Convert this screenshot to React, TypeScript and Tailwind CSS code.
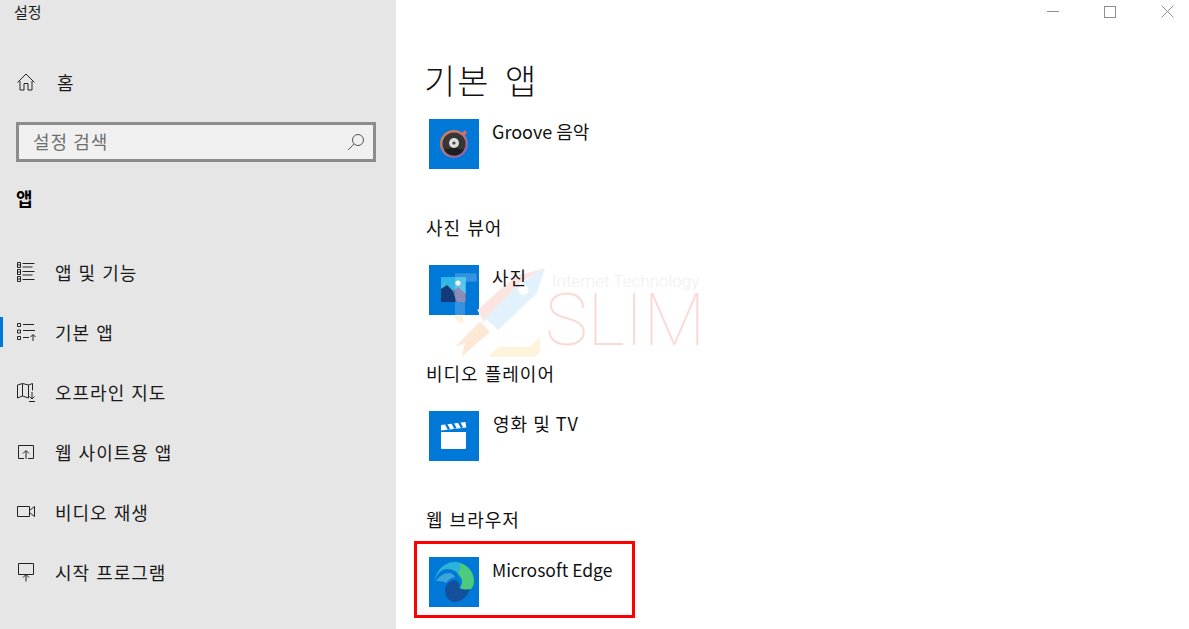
import type { ReactNode } from "react";

const font = { sans: "font-['Noto_Sans_CJK_KR','Noto_Sans',sans-serif]" };

function NavIcon({ children }: { children: ReactNode }) {
  return (
    <svg width="20" height="20" viewBox="0 0 20 20" fill="none" stroke="#222" strokeWidth="1" className="shrink-0">
      {children}
    </svg>
  );
}

const navItems: { label: string; icon: ReactNode; active?: boolean }[] = [
  {
    label: "앱 및 기능",
    icon: (
      <path d="M1.500 .5h3v5h-3zM1.500 7.500h3v5h-3zM1.500 14.500h3v5h-3zM1.500 3h3M1.500 10h3M1.500 17h3M6.500 1.500h12M6.500 5h10M6.500 9.500h12M6.500 13h10M6.500 17.500h12" />
    ),
  },
  {
    label: "기본 앱",
    active: true,
    icon: (
      <path d="M1.500 1.500h3v3h-3zM1.500 8h3v3h-3zM1.500 14.500h3v3h-3zM7 2.500h11M7 8.500h12M7 15.500h6M17 19v-6M14.500 15l2.500-2.500 2.500 2.500" />
    ),
  },
  {
    label: "오프라인 지도",
    icon: (
      <path d="M1.500 3v13l5-2 6 2V3l-6-1.500zM6.500 2v12M12.500 3l4-1.500v7M16 10v7M13.500 14.500l2.500 2.500 2.500-2.500M13 19.500h6" />
    ),
  },
  {
    label: "웹 사이트용 앱",
    icon: <path d="M6 16.500H2.500v-13h15v13H14M10 17V9M7 11.500L10 8.500l3 3M6 16.500h2M12 16.500h2" />,
  },
  {
    label: "비디오 재생",
    icon: <path d="M1.500 4.500h12v10h-12zM13.500 8.500l5-4v10l-5-4" />,
  },
  {
    label: "시작 프로그램",
    icon: <path d="M2.500 1.500h15v11h-15zM10 19.500v-7M7 15.500l3-3 3 3" />,
  },
];

function NavRow({ label, icon, active }: { label: string; icon: ReactNode; active?: boolean }) {
  return (
    <div className="relative flex h-[60px] items-center pl-[16px]">
      {active && <div className="absolute left-0 top-[15px] h-[30px] w-[3px] bg-[#0078d7]" />}
      <NavIcon>{icon}</NavIcon>
      <span className="ml-[19px] text-[18px] tracking-[1px] [word-spacing:1px] text-[#1a1a1a]">{label}</span>
    </div>
  );
}

function AppRow({ name, icon, textClass = "" }: { name: string; icon: ReactNode; textClass?: string }) {
  return (
    <div className="flex h-[50px] items-start pl-[33px]">
      <div className="h-[50px] w-[50px] shrink-0 bg-[#0078d7]">{icon}</div>
      <span className={`relative z-10 ml-[13px] mt-[-1px] leading-[26px] text-[#111] ${textClass}`}>{name}</span>
    </div>
  );
}

function SectionLabel({ children }: { children: ReactNode }) {
  return <h2 className="pl-[30px] text-[18px] leading-[26px] tracking-[1px] [word-spacing:1px] text-[#111]">{children}</h2>;
}

const grooveIcon = (
  <svg width="50" height="50" viewBox="0 0 50 50">
    <defs>
      <linearGradient id="ring" x1="0" y1="0" x2="1" y2="1">
        <stop offset="0" stopColor="#e8833f" />
        <stop offset="1" stopColor="#7a5fc0" />
      </linearGradient>
    </defs>
    <circle cx="25" cy="25" r="14" fill="url(#ring)" />
    <circle cx="25" cy="25" r="11.500" fill="#363636" />
    <path d="M15 30a11 11 0 0 0 20 0c-3 1-5 0-7-1h-6c-2 1-5 2-7 1z" fill="#1e1e1e" />
    <circle cx="25" cy="24" r="5" fill="#ddd" />
    <circle cx="25" cy="24" r="1.600" fill="#444" />
    <path d="M32 15l4-4 2 3-3 3z" fill="#d96a6a" />
  </svg>
);

const photoIcon = (
  <svg width="50" height="50" viewBox="0 0 50 50">
    <defs>
      <linearGradient id="sky" x1="0" y1="0" x2="0" y2="1">
        <stop offset="0" stopColor="#25b8e6" />
        <stop offset="1" stopColor="#5fb4ea" />
      </linearGradient>
    </defs>
    <rect x="12" y="12" width="25" height="25" fill="url(#sky)" />
    <path d="M12 24l6-4 6 6 4 11H12z" fill="#123b78" />
    <path d="M24 26l5-4 8 7v8h-9z" fill="#6f72a8" />
    <circle cx="29" cy="18" r="2.600" fill="#f1eee8" />
  </svg>
);

const movieIcon = (
  <svg width="50" height="50" viewBox="0 0 50 50">
    <path d="M12 21h25v16a1 1 0 0 1-1 1H13a1 1 0 0 1-1-1z" fill="#fff" />
    <path d="M12 14l24.500-3 .8 5.500-25.300 3z" fill="#fff" />
    <path d="M17 13l3 5.500M23.500 12l3 5.500M30 11.200l3 5.500" stroke="#0078d7" strokeWidth="2.400" />
  </svg>
);

const edgeIcon = (
  <svg width="50" height="50" viewBox="0 0 50 50">
    <path d="M5 26C7 13 15 5 26 5c2 0 4 .3 6 1 1 5 1 10 0 15-3-6-8-9-14-9C12 12 7 18 5 26z" fill="#2bb4d8" />
    <path d="M31 6c8 2 14 9 14 18 0 3-1 6-3 8-3 1-8 1-11-1 2-3 3-7 1-10-1-2-2-3-3-4 2-3 3-7 2-11z" fill="#4ccb7d" />
    <path d="M25 23c-5 1-9 5-9 10 0 6 3 11 9 12 7 0 13-5 16-13-4 1-8 1-11-1 1-4 0-7-5-8z" fill="#14509b" />
    <path d="M7 24c3-5 8-8 13-8 3 0 5 2 6 4-4 1-7 3-9 6-3-2-7-2-10-2z" fill="#3aa4dc" />
  </svg>
);

function Watermark() {
  return (
    <div className="pointer-events-none absolute left-[440px] top-[260px] h-[100px] w-[270px]">
      <svg width="270" height="100" viewBox="0 0 810 300" className="absolute inset-0">
        <path d="M45 40h65v25H75v100H45z" fill="#ffffff" fillOpacity="0.2" />
        <path d="M40 168h30v22L58 188z" fill="#fdf3dc" />
        <path d="M112 150l78-70 40-32 85-23-77 45-106 115z" fill="#fce4e1" />
        <path d="M135 175L235 75l80-50-25 75-115 110z" fill="#e1f2fd" />
        <circle cx="250" cy="90" r="15" fill="#fff" />
        <path d="M45 260l75-75 30 30-85 75 10-40z" fill="#fde8d6" />
        <path d="M300 145v85l-30 30h-95l-30 30h140l15-15z" fill="#fef4dc" />
      </svg>
      <span className="absolute left-[112px] top-[12px] whitespace-nowrap font-['Roboto',sans-serif] text-[17px] font-light leading-[18px] text-[#efefef]">
        Internet Technology
      </span>
      <span className="absolute left-[105px] top-[37px] font-['Roboto',sans-serif] text-[72px] font-thin leading-[48px] text-[#fad9d6]">
        SLIM
      </span>
    </div>
  );
}

export default function App() {
  return (
    <div className={`relative flex h-[629px] w-[1189px] overflow-hidden bg-white ${font.sans}`}>
      <aside className="flex w-[396px] shrink-0 flex-col bg-[#e6e6e6]">
        <div className="h-[24px] pl-[14px] text-[15px] leading-[24px] text-[#222]">설정</div>
        <div className="mt-[28px] flex h-[60px] items-center pl-[16px]">
          <NavIcon>
            <path d="M1.500 10.500L10 2l8.500 8.500M4 9v9h4v-6.500h4V18h4V9" />
          </NavIcon>
          <span className="ml-[21px] text-[18px] text-[#1a1a1a]">홈</span>
        </div>
        <div className="ml-[16px] mr-[20px] mt-[10px] flex h-[40px] items-center border-[3px] border-[#8c8c8c] bg-[#f0f0f0] pl-[14px] pr-[8px]">
          <span className="mt-[-2px] flex-1 text-[18px] tracking-[1px] text-[#6f6f6f]">설정 검색</span>
          <svg width="18" height="18" viewBox="0 0 18 18" fill="none" stroke="#555" strokeWidth="1">
            <circle cx="11" cy="7" r="5.500" />
            <path d="M7 11l-6 6" />
          </svg>
        </div>
        <div className="mt-[23px] h-[28px] pl-[16px] text-[18px] font-bold leading-[26px] text-black">앱</div>
        <nav className="mt-[29px] flex flex-col">
          {navItems.map((item) => (
            <NavRow key={item.label} label={item.label} icon={item.icon} active={item.active} />
          ))}
        </nav>
      </aside>

      <main className="flex min-w-0 flex-1 flex-col">
        <div className="flex h-[24px] items-start justify-end">
          <div className="flex h-[23px] w-[57px] items-center justify-center">
            <div className="h-px w-[12px] bg-[#8f8f8f]" />
          </div>
          <div className="flex h-[23px] w-[57px] items-center justify-center">
            <div className="h-[12px] w-[12px] border border-[#8f8f8f]" />
          </div>
          <div className="mr-[-6.500px] flex h-[23px] w-[57px] items-center justify-center">
            <svg width="13" height="13" viewBox="0 0 13 13" stroke="#8f8f8f" strokeWidth="1">
              <path d="M.5.500l12 12M12.500.500l-12 12" />
            </svg>
          </div>
        </div>
        <h1 className="mt-[31px] h-[45px] pl-[28px] text-[34px] font-light leading-[50px] tracking-[2px] [word-spacing:5px] text-[#111]">기본 앱</h1>
        <div className="mt-[19px]">
          <AppRow name="Groove 음악" icon={grooveIcon} textClass="text-[18px]" />
        </div>
        <div className="mt-[45px]">
          <SectionLabel>사진 뷰어</SectionLabel>
        </div>
        <div className="mt-[25px]">
          <AppRow name="사진" icon={photoIcon} textClass="text-[18px] tracking-[1px]" />
        </div>
        <div className="mt-[45px]">
          <SectionLabel>비디오 플레이어</SectionLabel>
        </div>
        <div className="mt-[25px]">
          <AppRow name="영화 및 TV" icon={movieIcon} textClass="text-[18px] tracking-[1px] pl-[1px]" />
        </div>
        <div className="mt-[45px]">
          <SectionLabel>웹 브라우저</SectionLabel>
        </div>
        <div className="relative mt-[25px]">
          <AppRow name="Microsoft Edge" icon={edgeIcon} textClass="text-[17.500px] pt-[1px]" />
          <div className="pointer-events-none absolute left-[18px] top-[-16px] h-[77px] w-[221px] border-[3px] border-[#ff0000]" />
        </div>
      </main>

      <Watermark />
    </div>
  );
}
